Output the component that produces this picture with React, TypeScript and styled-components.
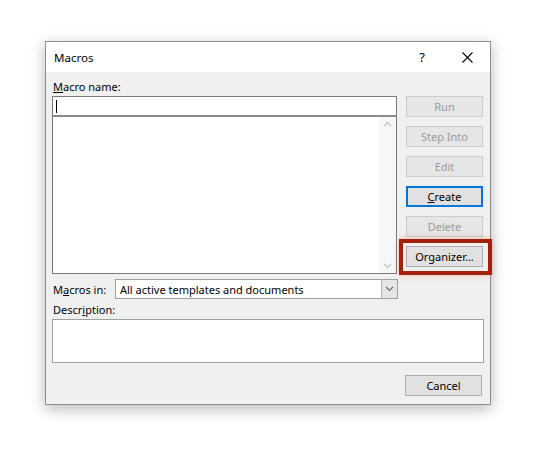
import React from 'react';
import styled, { createGlobalStyle } from 'styled-components';

const GlobalStyle = createGlobalStyle`
  html, body {
    margin: 0;
    padding: 0;
    background: #ffffff;
  }
  body {
    font-family: 'Segoe UI', 'Noto Sans', 'Open Sans', sans-serif;
    font-size: 11px;
    color: #000;
  }
`;

const Page = styled.div`
  width: 537px;
  height: 453px;
  padding: 41px 0 0 45px;
  box-sizing: border-box;
`;

const Dialog = styled.div`
  width: 446px;
  height: 364px;
  box-sizing: border-box;
  border: 1px solid #8e8e8e;
  background: #f0f0f0;
  box-shadow: 0 4px 14px rgba(0, 0, 0, 0.28);
  display: flex;
  flex-direction: column;
`;

const TitleBar = styled.div`
  height: 30px;
  background: #ffffff;
  display: flex;
  align-items: center;
  padding-left: 8px;
`;

const Title = styled.div`
  flex: 1;
  font-size: 11.5px;
`;

const TitleButton = styled.div<{ $width: number }>`
  width: ${(p) => p.$width}px;
  height: 30px;
  display: flex;
  align-items: center;
  justify-content: center;
  font-size: 13px;
`;

const Body = styled.div`
  padding: 6px 6px 0 6px;
  display: flex;
  flex-direction: column;
`;

const TopArea = styled.div`
  display: flex;
  gap: 9px;
`;

const LeftColumn = styled.div`
  width: 345px;
  display: flex;
  flex-direction: column;
`;

const Label = styled.div<{ $top?: number; $pad?: number }>`
  height: 17px;
  line-height: 17px;
  padding-left: 1px;
  margin-top: ${(p) => p.$top ?? 0}px;
  margin-bottom: ${(p) => p.$pad ?? 0}px;
`;

const NameInput = styled.div`
  height: 19px;
  box-sizing: border-box;
  border: 1px solid #7a7a7a;
  border-bottom: none;
  background: #fff;
  display: flex;
  align-items: center;
  padding-left: 3px;
`;

const Caret = styled.div`
  width: 1px;
  height: 13px;
  background: #000;
`;

const MacroList = styled.div`
  height: 159px;
  box-sizing: border-box;
  border: 1px solid #7a7a7a;
  border-top: 2px solid #8a8a8a;
  background: #fff;
  display: flex;
  justify-content: flex-end;
`;

const ScrollTrack = styled.div`
  width: 17px;
  background: #f7f7f7;
  display: flex;
  flex-direction: column;
  justify-content: space-between;
  align-items: center;
  padding: 4px 0;
`;

const ButtonColumn = styled.div`
  display: flex;
  flex-direction: column;
  gap: 9px;
  padding-top: 18px;
`;

const Button = styled.div<{ $disabled?: boolean; $primary?: boolean }>`
  position: relative;
  width: 77px;
  height: 21px;
  box-sizing: border-box;
  display: flex;
  align-items: center;
  justify-content: center;
  background: ${(p) => (p.$disabled ? '#e6e6e6' : '#e1e1e1')};
  border: ${(p) =>
    p.$primary ? '2px solid #0078d7' : p.$disabled ? '1px solid #cccccc' : '1px solid #adadad'};
  color: ${(p) => (p.$disabled ? '#9b9b9b' : '#000')};
`;

const Highlight = styled.div`
  position: absolute;
  top: -8px;
  left: -8px;
  right: -10px;
  bottom: -9px;
  border: 4px solid #a3200c;
  box-shadow: 0 0 6px rgba(230, 110, 70, 0.45);
  pointer-events: none;
`;

const ComboRow = styled.div`
  display: flex;
  align-items: center;
  margin-top: 5px;
  height: 20px;
`;

const ComboLabel = styled.div`
  width: 62px;
  padding-left: 1px;
`;

const Combo = styled.div`
  width: 283px;
  height: 20px;
  box-sizing: border-box;
  border: 1px solid #a0a0a0;
  background: #fff;
  display: flex;
  align-items: center;
  padding-left: 4px;
`;

const ComboText = styled.div`
  flex: 1;
`;

const ComboButton = styled.div`
  width: 16px;
  height: 18px;
  box-sizing: border-box;
  border-left: 1px solid #b5b5b5;
  background: #e5e5e5;
  display: flex;
  align-items: center;
  justify-content: center;
`;

const DescriptionBox = styled.div`
  width: 432px;
  height: 44px;
  box-sizing: border-box;
  border: 1px solid #a0a0a0;
  background: #fff;
`;

const Footer = styled.div`
  display: flex;
  justify-content: flex-end;
  padding: 12px 2px 0 0;
`;

function Chevron({ up, color }: { up?: boolean; color: string }) {
  return (
    <svg width="9" height="6" viewBox="0 0 9 6">
      <path
        d={up ? 'M1 5 L4.5 1.5 L8 5' : 'M1 1 L4.5 4.5 L8 1'}
        fill="none"
        stroke={color}
        strokeWidth="1.2"
      />
    </svg>
  );
}

function CloseIcon() {
  return (
    <svg width="11" height="11" viewBox="0 0 11 11">
      <path d="M0.5 0.5 L10.5 10.5 M10.5 0.5 L0.5 10.5" stroke="#000" strokeWidth="1.1" />
    </svg>
  );
}

export default function App() {
  return (
    <>
      <GlobalStyle />
      <Page>
        <Dialog>
          <TitleBar>
            <Title>Macros</Title>
            <TitleButton $width={44}>?</TitleButton>
            <TitleButton $width={46}>
              <CloseIcon />
            </TitleButton>
          </TitleBar>
          <Body>
            <TopArea>
              <LeftColumn>
                <Label $pad={1}>
                  <u>M</u>acro name:
                </Label>
                <NameInput>
                  <Caret />
                </NameInput>
                <MacroList>
                  <ScrollTrack>
                    <Chevron up color="#c2c2c2" />
                    <Chevron color="#c2c2c2" />
                  </ScrollTrack>
                </MacroList>
              </LeftColumn>
              <ButtonColumn>
                <Button $disabled>Run</Button>
                <Button $disabled>Step Into</Button>
                <Button $disabled>Edit</Button>
                <Button $primary>
                  <span>
                    <u>C</u>reate
                  </span>
                </Button>
                <Button $disabled>Delete</Button>
                <Button>
                  <span>
                    Or<u>g</u>anizer...
                  </span>
                  <Highlight />
                </Button>
              </ButtonColumn>
            </TopArea>
            <ComboRow>
              <ComboLabel>
                M<u>a</u>cros in:
              </ComboLabel>
              <Combo>
                <ComboText>All active templates and documents</ComboText>
                <ComboButton>
                  <Chevron color="#6e6e6e" />
                </ComboButton>
              </Combo>
            </ComboRow>
            <Label $top={2} $pad={1}>
              Descr<u>i</u>ption:
            </Label>
            <DescriptionBox />
            <Footer>
              <Button>Cancel</Button>
            </Footer>
          </Body>
        </Dialog>
      </Page>
    </>
  );
}
